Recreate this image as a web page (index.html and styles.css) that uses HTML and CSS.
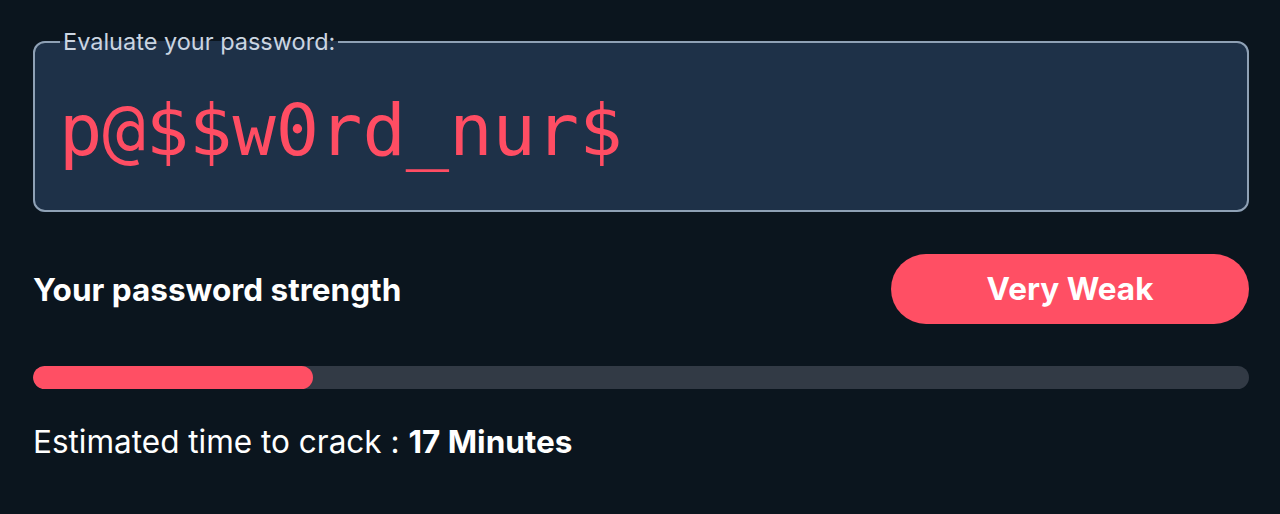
FILE: index.html
```html
<!doctype html>
<html>
  <head>
    <meta charset="utf-8">
    <title>Password Strength</title>
    <link rel="stylesheet" href="styles.css">
  </head>
<body>
<div class="checker">
  <fieldset class="pw_box">
    <legend>Evaluate your password:</legend>
    <input type="text" class="pw_input" value="p@$$w0rd_nur$" spellcheck="false">
  </fieldset>

  <div class="strength_row">
    <div class="strength_label">Your password strength</div>
    <div class="strength_badge">Very Weak</div>
  </div>

  <div class="bar">
    <div class="bar_fill" style="width:23%;"></div>
  </div>

  <div class="crack_time">Estimated time to crack : <b>17 Minutes</b></div>
</div>
</body>
</html>
```

FILE: styles.css
```css
html, body {
  margin: 0px;
  background-color: #0b151e;
  font-family: Inter, "Noto Sans", sans-serif;
  color: #ffffff;
}

.checker {
  padding: 28px 31px 0 33px;
}

.pw_box {
  margin: 0;
  padding: 32px 25px 0 24px;
  height: 148px;
  border: 2px solid #8fa1b5;
  border-radius: 12px;
  background-color: #1e3148;
}

.pw_box legend {
  margin-left: 1px;
  padding: 0 3px;
  font-size: 23.5px;
  line-height: 28px;
  color: #cbd5e1;
}

.pw_input {
  width: 100%;
  background: transparent;
  border: none;
  outline: none;
  padding: 0;
  font-family: "DejaVu Sans Mono", monospace;
  font-size: 72px;
  color: #ff4d63;
}

.strength_row {
  display: flex;
  justify-content: space-between;
  align-items: center;
  margin-top: 42px;
}

.strength_label {
  font-size: 31.5px;
  font-weight: 700;
}

.strength_badge {
  width: 358px;
  height: 70px;
  line-height: 70px;
  text-align: center;
  border-radius: 35px;
  background-color: #ff4f64;
  font-size: 31.5px;
  font-weight: 700;
}

.bar {
  margin-top: 42px;
  height: 23px;
  border-radius: 12px;
  background-color: #323a45;
  overflow: hidden;
}

.bar_fill {
  height: 100%;
  border-radius: 12px;
  background-color: #ff4f64;
}

.crack_time {
  margin-top: 33px;
  font-size: 31.5px;
}
```
